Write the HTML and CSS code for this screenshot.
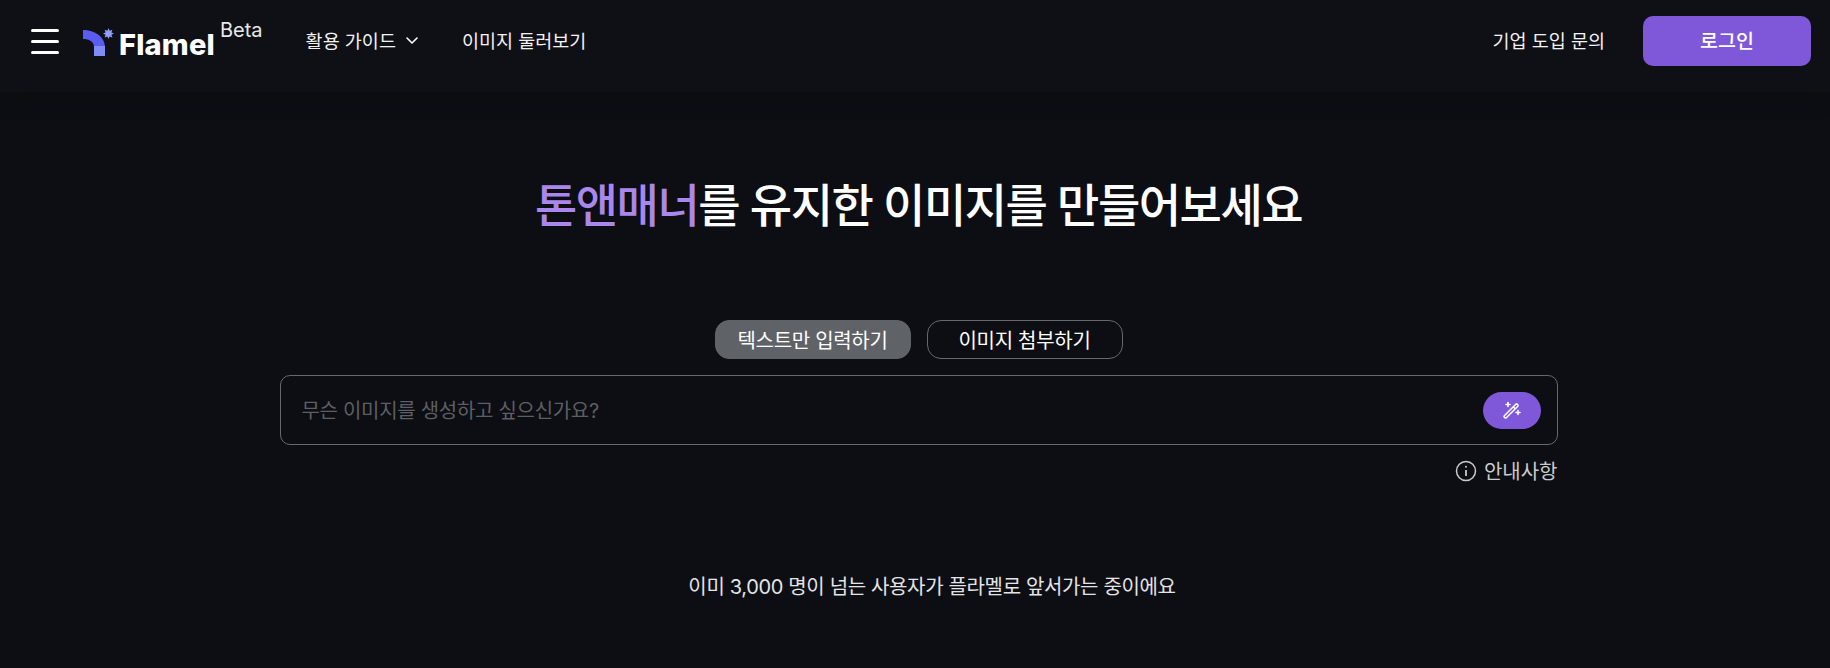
FILE: index.html
```html
<!DOCTYPE html>
<html lang="ko">
<head>
    <meta charset="UTF-8">
    <meta name="viewport" content="width=device-width, initial-scale=1.0">
    <title>Flamel</title>
    <link rel="stylesheet" href="styles.css">
</head>
<body>
    <header class="topbar">
        <div class="topbar-left">
            <button class="menu-btn" aria-label="menu">
                <span></span><span></span><span></span>
            </button>
            <a class="logo" href="#">
                <svg class="logo-mark" width="32" height="28" viewBox="0 0 32 28">
                    <path d="M0 2v9c6 0 11 2.500 11 8v1h11v-1C22 9 12 2 0 2z" fill="#5a5cf0"/>
                    <rect x="11" y="18" width="11" height="10" fill="#7f8cf5"/>
                    <path d="M25.500 0l1.100 2.700 2.800-1-1 2.800 2.600 1.100-2.600 1.100 1 2.800-2.800-1-1.100 2.600-1.100-2.600-2.800 1 1-2.800-2.600-1.100 2.600-1.100-1-2.800 2.800 1z" fill="#929ef8"/>
                </svg>
                <span class="logo-name">Flamel</span>
                <span class="logo-beta">Beta</span>
            </a>
            <nav class="nav">
                <a class="nav-link" href="#">활용 가이드
                    <svg width="14" height="14" viewBox="0 0 14 14" fill="none" stroke="#fff" stroke-width="1.600" stroke-linecap="round" stroke-linejoin="round"><path d="M2 5l5 5 5-5"/></svg>
                </a>
                <a class="nav-link" href="#">이미지 둘러보기</a>
            </nav>
        </div>
        <div class="topbar-right">
            <a class="nav-link" href="#">기업 도입 문의</a>
            <button class="login-btn">로그인</button>
        </div>
    </header>

    <main class="main">
        <h1 class="headline"><span class="accent">톤앤매너</span>를 유지한 이미지를 만들어보세요</h1>

        <div class="tabs">
            <button class="tab tab-active">텍스트만 입력하기</button>
            <button class="tab">이미지 첨부하기</button>
        </div>

        <div class="prompt">
            <span class="placeholder">무슨 이미지를 생성하고 싶으신가요?</span>
            <button class="wand-btn" aria-label="generate">
                <svg width="20" height="20" viewBox="0 0 20 20" fill="none" stroke="#fff" stroke-width="1.500" stroke-linejoin="round">
                    <path d="M2.300 15.700L13.800 4.200a1 1 0 0 1 1.400 0l.6.6a1 1 0 0 1 0 1.400L4.300 17.700a1 1 0 0 1-1.400 0l-.6-.6a1 1 0 0 1 0-1.400z"/>
                    <path d="M11.200 6.800l2 2"/>
                    <path d="M6 2.500v4M4 4.500h4M16 10.500v4M14 12.500h4" stroke-linecap="round" stroke-width="1.600"/>
                </svg>
            </button>
        </div>

        <div class="notice">
            <svg width="22" height="22" viewBox="0 0 22 22" fill="none" stroke="#c9cacc" stroke-width="1.500">
                <circle cx="11" cy="11" r="9.500"/>
                <path d="M11 10v6" stroke-width="1.800"/>
                <circle cx="11" cy="6.800" r="1" fill="#c9cacc" stroke="none"/>
            </svg>
            <span>안내사항</span>
        </div>

        <p class="users">이미 3,000 명이 넘는 사용자가 플라멜로 앞서가는 중이에요</p>
    </main>
</body>
</html>
```

FILE: styles.css
```css
* {
    box-sizing: border-box;
}
html, body {
    height: 100%;
}
body {
    margin: 0;
    overflow: hidden;
    background-color: #0d0e13;
    color: #fff;
    font-family: Inter, "Noto Sans CJK KR", sans-serif;
}
a {
    color: inherit;
    text-decoration: none;
}
button {
    font-family: inherit;
    color: inherit;
    cursor: pointer;
    border: 0;
    background: none;
    padding: 0;
}

/* Top bar */
.topbar {
    display: flex;
    justify-content: space-between;
    align-items: center;
    height: 92px;
    padding: 0 19px 10px 31px;
    background-color: #0f1015;
    box-shadow: 0 6px 24px rgba(0, 0, 0, 0.12);
}
.topbar-left, .topbar-right {
    display: flex;
    align-items: center;
}
.menu-btn {
    display: flex;
    flex-direction: column;
    gap: 8px;
    width: 28px;
    margin-right: 24px;
}
.menu-btn span {
    display: block;
    height: 3px;
    border-radius: 2px;
    background-color: #fff;
}
.logo {
    display: flex;
    align-items: flex-end;
    height: 44px;
}
.logo-mark {
    margin-bottom: 7px;
}
.logo-name {
    margin-left: 4px;
    margin-bottom: 2px;
    font-size: 29px;
    font-weight: 800;
    line-height: 32px;
    letter-spacing: 0.2px;
}
.logo-beta {
    align-self: flex-start;
    margin-left: 5px;
    font-size: 20px;
    line-height: 22px;
    color: #e8e8ea;
}
.nav {
    display: flex;
    align-items: center;
    gap: 43px;
    margin-left: 43px;
}
.nav-link {
    display: flex;
    align-items: center;
    gap: 9px;
    padding-bottom: 2px;
    font-size: 18.5px;
    color: #f2f2f3;
}
.login-btn {
    width: 168px;
    height: 50px;
    margin-left: 38px;
    padding-bottom: 3px;
    border-radius: 10px;
    background-color: #7f58d9;
    font-size: 19.5px;
    font-weight: 500;
}

/* Main */
.main {
    display: flex;
    flex-direction: column;
    align-items: center;
    padding-left: 7px;
}
.headline {
    margin: 74px 0 0;
    font-size: 46px;
    font-weight: 500;
    line-height: 78px;
    letter-spacing: -1.5px;
}
.accent {
    color: #a987ec;
}
.tabs {
    display: flex;
    gap: 16px;
    margin-top: 76px;
}
.tab {
    width: 196px;
    height: 39px;
    border: 1px solid #66686c;
    border-radius: 14px;
    font-size: 20px;
    letter-spacing: -0.3px;
}
.tab-active {
    border-color: #5f6367;
    background-color: #5f6367;
}
.prompt {
    display: flex;
    justify-content: space-between;
    align-items: center;
    width: 1278px;
    height: 70px;
    margin-top: 16px;
    padding: 0 16px 0 21px;
    border: 1px solid #66686c;
    border-radius: 10px;
}
.placeholder {
    padding-bottom: 2px;
    font-size: 20px;
    letter-spacing: -0.3px;
    color: #5d5f63;
}
.wand-btn {
    display: flex;
    justify-content: center;
    align-items: center;
    width: 58px;
    height: 37px;
    border-radius: 19px;
    background-color: #7f58d9;
}
.notice {
    display: flex;
    align-items: center;
    justify-content: flex-end;
    gap: 7px;
    width: 1278px;
    margin-top: 11px;
    font-size: 20px;
    color: #c9cacc;
}
.users {
    margin: 86px 0 0 27px;
    font-size: 20px;
    letter-spacing: -0.35px;
    color: #e4e4e6;
}
```
